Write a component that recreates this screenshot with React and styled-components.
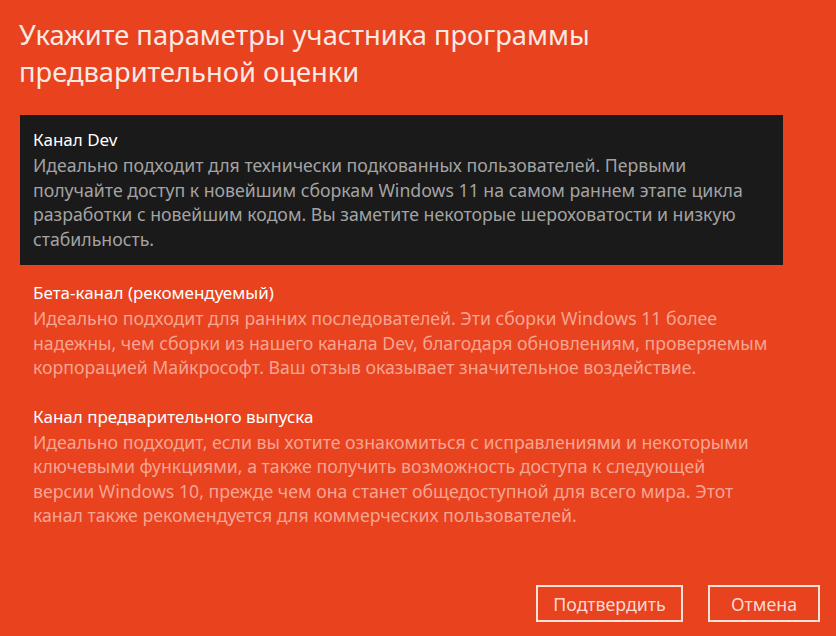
import styled, { createGlobalStyle } from "styled-components";

const Global = createGlobalStyle`
  html, body {
    margin: 0;
    padding: 0;
    background: #e8421f;
  }
  body {
    font-family: "Noto Sans", "Open Sans", sans-serif;
  }
`;

const Page = styled.div`
  width: 836px;
  height: 636px;
  box-sizing: border-box;
  padding: 16px 16px 14px 20px;
  display: flex;
  flex-direction: column;
  background: #e8421f;
  overflow: hidden;
`;

const Heading = styled.h1`
  margin: 0 0 25px -1px;
  font-size: 27.3px;
  line-height: 37px;
  font-weight: 400;
  color: #fbe9e4;
  width: 640px;
`;

const List = styled.div`
  display: flex;
  flex-direction: column;
  width: 763px;
`;

const Option = styled.div`
  padding: ${(p) => (p.$selected ? "12px 15px 14px 13px" : "13px 15px 11px 13px")};
  background: ${(p) => (p.$selected ? "#1a1a1a" : "transparent")};
  margin-bottom: ${(p) => (p.$selected ? "2px" : "0")};
`;

const OptionTitle = styled.div`
  font-size: 17px;
  line-height: 26px;
  color: #ffffff;
`;

const OptionText = styled.div`
  font-size: 17.7px;
  line-height: 24.5px;
  color: ${(p) => (p.$selected ? "#a3a3a3" : "#f6a591")};
`;

const Footer = styled.div`
  margin-top: auto;
  display: flex;
  justify-content: flex-end;
  gap: 25px;
`;

const Button = styled.button`
  box-sizing: border-box;
  height: 37px;
  min-width: ${(p) => p.$w}px;
  padding: 0 12px;
  background: transparent;
  border: 2px solid #fbe3dc;
  color: #f9d9d0;
  font-family: "Noto Sans", "Open Sans", sans-serif;
  font-size: 17.8px;
`;

const options = [
  {
    title: "Канал Dev",
    text: "Идеально подходит для технически подкованных пользователей. Первыми получайте доступ к новейшим сборкам Windows 11 на самом раннем этапе цикла разработки с новейшим кодом. Вы заметите некоторые шероховатости и низкую стабильность.",
    selected: true,
  },
  {
    title: "Бета-канал (рекомендуемый)",
    text: "Идеально подходит для ранних последователей. Эти сборки Windows 11 более надежны, чем сборки из нашего канала Dev, благодаря обновлениям, проверяемым корпорацией Майкрософт. Ваш отзыв оказывает значительное воздействие.",
  },
  {
    title: "Канал предварительного выпуска",
    text: "Идеально подходит, если вы хотите ознакомиться с исправлениями и некоторыми ключевыми функциями, а также получить возможность доступа к следующей версии Windows 10, прежде чем она станет общедоступной для всего мира. Этот канал также рекомендуется для коммерческих пользователей.",
  },
];

export default function App() {
  return (
    <Page>
      <Global />
      <Heading>Укажите параметры участника программы предварительной оценки</Heading>
      <List>
        {options.map((o) => (
          <Option key={o.title} $selected={o.selected}>
            <OptionTitle>{o.title}</OptionTitle>
            <OptionText $selected={o.selected}>{o.text}</OptionText>
          </Option>
        ))}
      </List>
      <Footer>
        <Button $w={147}>Подтвердить</Button>
        <Button $w={112}>Отмена</Button>
      </Footer>
    </Page>
  );
}
